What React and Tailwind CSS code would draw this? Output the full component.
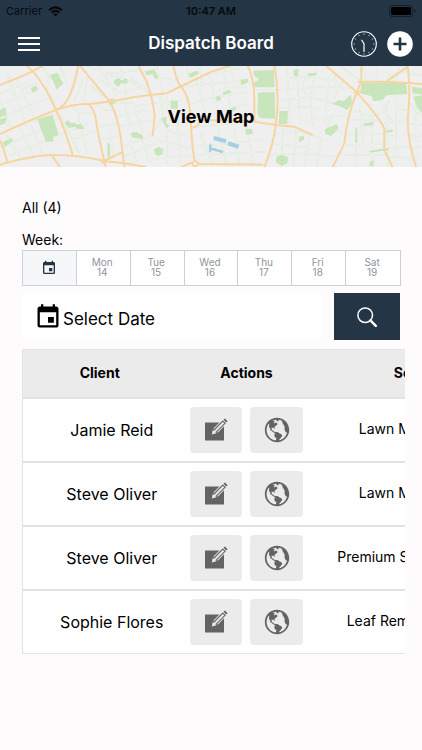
import { useState } from "react";
import { MdEvent } from "react-icons/md";
import { IoMdGlobe } from "react-icons/io";

const days = [
  { name: "Mon", date: 14 },
  { name: "Tue", date: 15 },
  { name: "Wed", date: 16 },
  { name: "Thu", date: 17 },
  { name: "Fri", date: 18 },
  { name: "Sat", date: 19 },
];

const jobs = [
  { id: 1, client: "Jamie Reid", service: "Lawn Mowing" },
  { id: 2, client: "Steve Oliver", service: "Lawn Mowing" },
  { id: 3, client: "Steve Oliver", service: "Premium Snow Plow" },
  { id: 4, client: "Sophie Flores", service: "Leaf Removal Fall" },
];

const parks = [
  "M150 45 172 38 190 72 170 88Z",
  "M112 178 158 164 176 225 158 230 162 244 138 246Z",
  "M92 85 108 76 114 88 98 98Z",
  "M0 150 16 142 20 165 0 172Z M0 178 20 172 16 190 0 196Z",
  "M340 62 356 54 364 62 380 54 384 70 362 70 356 80 346 76Z",
  "M434 34 464 28 476 54 466 58 458 42 440 46Z",
  "M565 42 590 32 598 40 572 54Z",
  "M512 122H533V146H512Z",
  "M194 188 204 180 212 190 224 188 230 194 242 192 254 206 232 208 226 200 206 204Z",
  "M392 218 410 216 430 228 428 238 396 232Z",
  "M462 268 476 260 490 268 488 282 474 288 464 280Z",
  "M322 250H330V290H322Z",
  "M320 122 338 114 348 128 332 138Z",
  "M8 246 36 234 40 242 14 262Z",
  "M484 176 500 170 498 190 510 196 500 206Z",
  "M760 32 822 30 824 82H766L760 70 778 56 762 48Z",
  "M774 98 824 96 826 176 780 174 772 160Z",
  "M838 154 864 152 862 192H836Z",
  "M1086 68 1218 66 1222 102 1160 106 1148 120 1120 124 1114 108 1080 100Z",
  "M996 132 1016 120 1030 124 1052 104 1056 128 1042 150 1018 138Z",
  "M974 208 1010 192 1016 204 994 228 976 222Z",
  "M830 290 846 284 864 292 862 310 844 318 828 306Z",
  "M896 232 910 226 914 238 898 248Z",
  "M880 30 896 26 894 50 882 48Z M922 40 950 38V46L924 48Z",
  "M1066 204 1072 202V250H1066Z M1090 190 1122 186 1120 196 1092 198Z",
  "M1240 110 1266 106V160L1250 140Z M1236 80 1266 84V104L1238 100Z",
  "M1106 272 1166 264V270L1108 278Z M1110 304 1122 302 1120 318H1108Z",
  "M668 96 690 90 694 98 670 106Z M684 150 704 140 710 148 690 158Z",
  "M648 110 660 108 664 120 650 124Z M722 60 742 56 746 66 724 76Z",
  "M735 208 756 206 758 222 738 224Z M1156 212 1178 208V216L1158 218Z",
];

const lanes = [
  "M0 100 90 66M10 130 120 85M22 40 80 200M50 55 108 188M0 118 30 205M66 88 110 70M30 160 140 116M125 17 148 50 140 90 166 128M140 60 212 32M180 17 200 70",
  "M60 200 100 290M20 225 60 292M0 262 140 205M30 285 180 226M90 190 130 284M180 165 240 282M176 225 270 190M190 250 290 214M230 150 262 282M215 134 232 160 282 160",
  "M232 55 210 110M248 60 222 128M262 50 250 130M270 75 312 108M290 130 312 150 350 150M260 20 340 40 420 30M300 20 350 110M300 60 360 96 440 80M360 17 380 110M318 40 410 70M390 50 448 100",
  "M346 130 400 128 430 220M350 170 450 150M375 130 390 205M400 140 452 132M360 200 460 180M368 260 460 225M370 290 470 250M390 240 410 312M420 220 450 310M300 200 350 190M296 240 360 225M330 210 340 290",
  "M460 50 530 60M470 20 490 98M450 130 560 120M480 105 490 170 465 210M500 110 510 180 570 190M490 210 570 230M470 240 575 265M500 210 500 310M530 130 540 310M440 300 570 285M560 20 570 68M600 17 606 80",
  "M548 80 640 70 740 60M575 130 650 110 745 96M590 60 620 180M630 50 660 180M670 30 700 190M640 160 745 130M580 200 745 188M600 220 640 310M650 190 680 312M700 190 718 312M590 260 790 240M590 285 800 275M740 200 760 310",
  "M640 40 720 24M650 90 740 80M690 20 700 60M765 90H830M830 60 920 50 1000 60M838 90 920 82 1010 80M840 120 930 112 1000 130M835 145 910 140 980 150M860 17 870 192M890 20 900 190M920 50 900 90 940 110M950 17 930 110 940 200M985 50 975 190",
  "M826 220 900 215 980 240M815 250 920 262M810 285 900 280 1010 290M850 200 845 280M890 200 880 320M930 220 915 320M965 230 950 320M1000 160 980 210 1030 215M920 180 1040 165M1010 90 1060 80M1000 30 1010 80M1030 60 1000 120M1020 17 1080 60",
  "M1060 150 1110 170 1150 160M1050 180 1140 180M1044 220 1150 222M1040 255 1150 252M1030 285 1160 285M1080 140 1090 250M1110 130 1120 320M1068 260 1070 320M1160 130 1165 320M1190 115 1186 310M1150 190 1225 180M1155 230 1225 225M1160 265 1230 260M1160 290 1240 295",
  "M1090 20 1100 62M1130 17V60M1160 50 1230 30M1180 80 1200 17M1230 40 1266 46M1228 130 1266 170M1224 190 1266 195M1226 230 1266 226M1232 265 1266 260M1248 110 1250 310M1190 150 1224 150M1170 120 1150 145 1180 190",
];

const roads = [
  "M0 75Q60 52 95 35L130 17",
  "M80 17 100 35Q140 85 168 150Q196 210 218 285",
  "M235 17Q222 80 205 115Q190 142 168 150",
  "M0 222Q90 180 168 150Q220 130 270 132Q340 125 400 112Q450 105 500 100Q540 80 633 36L690 17",
  "M240 17Q300 90 330 125Q350 160 362 230L373 322",
  "M265 132Q280 145 285 165Q295 230 312 300L318 322",
  "M0 240Q15 275 22 305",
  "M0 314Q100 285 160 285Q240 285 312 303Q400 312 440 322",
  "M312 303 370 275M155 285 180 322",
  "M415 17 440 65Q460 120 464 170L458 228",
  "M520 17Q530 65 543 80Q570 110 572 180Q575 250 585 310",
  "M545 322Q570 302 600 312L790 314",
  "M572 205Q600 200 600 180M600 180 765 184",
  "M743 17Q763 60 763 115V185L828 195 883 200Q913 215 938 225",
  "M823 17Q840 100 828 190Q822 250 793 322",
  "M978 17 1070 97 1084 65V17",
  "M1070 97Q1043 160 1033 250L998 322",
  "M1070 97Q1133 165 1153 205V270L1178 322",
  "M1073 65H1163L1266 72M1163 62 1223 20",
  "M1223 17Q1233 90 1223 180Q1223 240 1248 322",
];

const MapBackground = () => (
  <svg
    className="absolute inset-0 h-full w-full"
    viewBox="0 17 1266 305"
    preserveAspectRatio="xMidYMid slice"
    fill="none"
    aria-hidden="true"
  >
    <rect y="17" width="1266" height="305" fill="#f0eff0" />
    <path d={lanes.join("")} stroke="#dbead5" strokeWidth="5" />
    <path d={lanes.join("")} stroke="#f5f5f3" strokeWidth="2" />
    <path d={parks.join("")} fill="#c8e5bb" />
    <path
      d="M642 228 680 238 676 250 640 240Z M686 244 718 254 714 266 682 256Z M634 262 670 272 668 280 634 270Z M627 255 634 250V275H627Z"
      fill="#a5cfe4"
    />
    <path d={roads.join("")} stroke="#f6d5a0" strokeWidth="6" strokeLinejoin="round" />
    <circle cx="312" cy="304" r="8" fill="#f6d5a0" />
    <circle cx="1071" cy="97" r="8" fill="#f6d5a0" />
    <circle cx="585" cy="311" r="8" fill="#f0eff0" stroke="#f6d5a0" strokeWidth="5" />
  </svg>
);

const WifiIcon = () => (
  <svg className="h-[11px] w-[15px]" viewBox="0 0 15 11" fill="none" stroke="#05090d" strokeWidth="2">
    <path d="M1 4.2Q7.500-1.400 14 4.200M3.400 6.700Q7.500 3.100 11.600 6.700" />
    <path d="M7.500 10.600 5.200 8.300Q7.500 6.500 9.800 8.300Z" fill="#05090d" stroke="none" />
  </svg>
);

const BatteryIcon = () => (
  <svg className="h-[12px] w-[27px]" viewBox="0 0 27 12" fill="none">
    <rect x="0.500" y="0.500" width="23" height="11" rx="2.500" stroke="#131e29" />
    <rect x="2" y="2" width="20" height="8" rx="1.500" fill="#000" />
    <path d="M25 4v4q1.500-.6 1.500-2T25 4Z" fill="#131e29" />
  </svg>
);

const ClockIcon = () => (
  <svg className="h-[26px] w-[26px]" viewBox="0 0 26 26" fill="none" stroke="#fff" strokeLinecap="round">
    <circle cx="13" cy="13" r="12.300" strokeWidth="1.100" />
    <path d="M13 20.500V13L10.800 9.200" strokeWidth="1.200" />
    <path
      d="M13 2.800v.6M13 22.600v.6M2.800 13h.6M22.600 13h.6M7.900 4.200l.3.500M17.800 21.300l.3.500M4.200 7.900l.5.300M21.300 17.800l.5.300M18.100 4.200l-.3.500M8.200 21.300l-.3.500M21.800 7.900l-.5.300M4.700 17.800l-.5.300"
      strokeWidth="0.700"
    />
  </svg>
);

const PlusIcon = () => (
  <svg className="h-[26px] w-[26px]" viewBox="0 0 26 26">
    <circle cx="13" cy="13" r="12.800" fill="#fff" />
    <path d="M13 6.500v13M6.500 13h13" stroke="#243545" strokeWidth="2.600" />
  </svg>
);

const SearchIcon = () => (
  <svg className="h-5 w-5" viewBox="0 0 20 20" fill="none" stroke="#fff">
    <circle cx="8.200" cy="8.200" r="7.300" strokeWidth="1.500" />
    <path d="M13.400 13.400 18.800 18.800" strokeWidth="2.400" strokeLinecap="round" />
  </svg>
);

const EditIcon = () => (
  <svg className="h-6 w-6" viewBox="0 0 24 24">
    <path d="M1 4.500H20V22.500H1Z" fill="#636363" />
    <path d="M14.500 4.400 20.200 4.400 20.200 8.600 18 6.200Z" fill="#ebebeb" />
    <path d="M11.500 12.700 21.500 2.500" stroke="#ebebeb" strokeWidth="6" />
    <path d="M10.600 13.600 20.300 3.800" stroke="#636363" strokeWidth="4.200" />
    <path d="M7.800 16.400 8.900 11.800 12.400 15.300Z" fill="#ebebeb" />
    <path d="M10.400 13.800 19.600 4.500" stroke="#ebebeb" strokeWidth="1.900" />
    <path d="M20.900 3.200 22.300 1.800" stroke="#636363" strokeWidth="3.800" />
  </svg>
);

const App = () => {
  const [selectedDay, setSelectedDay] = useState(null);

  return (
    <div className="min-h-screen bg-[#fdfbfc] font-['Inter','Liberation_Sans',sans-serif] text-black">
      <header className="bg-[#243545] text-[#05090d]">
        <div className="grid grid-cols-[1fr_auto_1fr] items-center h-[22px] px-[6px] text-[11px]">
          <div className="flex items-center gap-1.5">
            <span>Carrier</span>
            <WifiIcon />
          </div>
          <span className="text-center font-semibold">10:47 AM</span>
          <div className="flex justify-end">
            <BatteryIcon />
          </div>
        </div>
        <div className="grid grid-cols-[1fr_auto_1fr] items-center h-11 px-[9px]">
          <div className="flex pl-[9px]">
            <button aria-label="Menu" className="flex w-[22px] flex-col gap-1">
              <span className="h-0.5 w-full bg-white" />
              <span className="h-0.5 w-full bg-white" />
              <span className="h-0.5 w-full bg-white" />
            </button>
          </div>
          <h1 className="text-[17px] font-semibold text-white">Dispatch Board</h1>
          <div className="flex justify-end gap-2.5">
            <button aria-label="History">
              <ClockIcon />
            </button>
            <button aria-label="Add job">
              <PlusIcon />
            </button>
          </div>
        </div>
      </header>

      <a href="#map" className="relative flex h-[101px] items-center justify-center overflow-hidden">
        <MapBackground />
        <span className="relative text-[18px] font-bold">View Map</span>
      </a>

      <main className="pl-[22px] pt-[31px]">
        <p className="text-sm leading-5">All (4)</p>
        <p className="mt-3 text-sm leading-5">Week:</p>

        <div className="mr-[21px] grid h-9 grid-cols-7 divide-x divide-[#cdd1d7] border border-[#cdd1d7] bg-white">
          <button
            aria-label="Whole week"
            onClick={() => setSelectedDay(null)}
            className="flex items-center justify-center bg-[#f5f7f9] text-[#243545]"
          >
            <MdEvent className="h-4 w-4" />
          </button>
          {days.map((day) => (
            <button
              key={day.date}
              aria-pressed={selectedDay === day.date}
              onClick={() => setSelectedDay(day.date)}
              className="pr-0.5 pb-0.5 text-center text-[10px] leading-[10px] text-[#8f949b]"
            >
              {day.name}
              <br />
              {day.date}
            </button>
          ))}
        </div>

        <div className="mr-[22px] mt-[7px] flex gap-3">
          <button className="flex h-[47px] flex-1 items-center bg-white pl-3 text-[17px]">
            <MdEvent className="h-7 w-7" />
            <span className="pt-1.5 pl-px">Select Date</span>
          </button>
          <button
            aria-label="Search"
            className="flex h-[47px] w-[66px] items-center justify-center bg-[#243545]"
          >
            <SearchIcon />
          </button>
        </div>

        <div className="mr-[17px] mt-[9px] overflow-x-auto [scrollbar-width:none]">
          <table className="w-[510px] table-fixed border-collapse border border-[#e3e3e4] bg-white">
            <thead>
              <tr className="h-12 border-b-2 border-[#e3e3e4] bg-[#ebebeb] text-sm">
                <th className="w-[154px] font-bold">Client</th>
                <th className="w-[140px] font-bold">Actions</th>
                <th className="font-bold">Services</th>
              </tr>
            </thead>
            <tbody>
              {jobs.map((job) => (
                <tr key={job.id} className="h-16 border-b-2 border-[#e3e3e4] last:border-b">
                  <td className="pl-6 text-center text-base">{job.client}</td>
                  <td>
                    <div className="flex justify-center gap-2">
                      <button
                        aria-label="Edit"
                        className="flex h-[46px] w-[52px] items-center justify-center rounded bg-[#ebebeb]"
                      >
                        <EditIcon />
                      </button>
                      <button
                        aria-label="Show on map"
                        className="flex h-[46px] w-[53px] items-center justify-center rounded bg-[#ebebeb] text-[#636363]"
                      >
                        <IoMdGlobe className="h-[30px] w-[30px]" />
                      </button>
                    </div>
                  </td>
                  <td className="pr-[38px] pb-0.5 text-center text-sm">{job.service}</td>
                </tr>
              ))}
            </tbody>
          </table>
        </div>
      </main>
    </div>
  );
};

export default App;
